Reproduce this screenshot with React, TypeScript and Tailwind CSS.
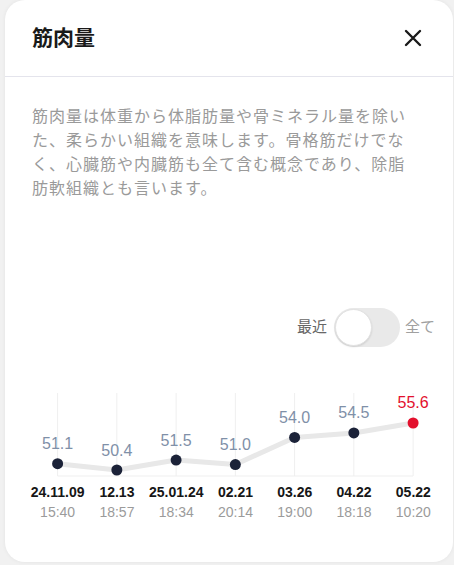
import React from "react";

const points = [
  { value: 51.1, date: "24.11.09", time: "15:40" },
  { value: 50.4, date: "12.13", time: "18:57" },
  { value: 51.5, date: "25.01.24", time: "18:34" },
  { value: 51.0, date: "02.21", time: "20:14" },
  { value: 54.0, date: "03.26", time: "19:00" },
  { value: 54.5, date: "04.22", time: "18:18" },
  { value: 55.6, date: "05.22", time: "10:20" },
];

const STEP = 59.25;
const X0 = 29.6;
const xAt = (i: number) => X0 + STEP * i;
const yAt = (v: number) => 80 - (v - 50.4) * 9.04;

function CloseIcon() {
  return (
    <svg width="18" height="18" viewBox="0 0 18 18" fill="none">
      <path d="M2 2L16 16M16 2L2 16" stroke="#1a1a1a" strokeWidth="2.4" strokeLinecap="round" />
    </svg>
  );
}

function Chart() {
  const last = points.length - 1;
  const linePath = points.map((p, i) => `${i === 0 ? "M" : "L"}${xAt(i)} ${yAt(p.value)}`).join(" ");

  return (
    <div className="ml-[23px] mt-[43px] w-[415px]">
      <svg width="415" height="90" viewBox="0 0 415 90" className="block">
        {points.map((_, i) => (
          <line key={i} x1={xAt(i)} x2={xAt(i)} y1={3} y2={86} stroke="#efefef" strokeWidth="1" />
        ))}
        <line x1={xAt(0)} x2={xAt(last)} y1={86} y2={86} stroke="#efefef" strokeWidth="1" />
        <path d={linePath} stroke="#e8e8e8" strokeWidth="5" fill="none" strokeLinecap="round" strokeLinejoin="round" />
        {points.map((p, i) => (
          <g key={p.date}>
            <circle cx={xAt(i)} cy={yAt(p.value)} r="5.5" fill={i === last ? "#e3102d" : "#1b2238"} />
            <text
              x={xAt(i)}
              y={yAt(p.value) - 14.5}
              textAnchor="middle"
              fontSize="16"
              fill={i === last ? "#e3102d" : "#7f90a8"}
              fontFamily='"Liberation Sans", Arial, sans-serif'
            >
              {p.value.toFixed(1)}
            </text>
          </g>
        ))}
      </svg>
      <div className="mt-[2px] grid grid-cols-7 font-['Liberation_Sans',Arial,sans-serif] text-[14px] leading-[20px]">
        {points.map((p) => (
          <div key={p.date} className="flex flex-col items-center">
            <span className="font-bold text-[#161616]">{p.date}</span>
            <span className="text-[#9b9b9b]">{p.time}</span>
          </div>
        ))}
      </div>
    </div>
  );
}

export default function App() {
  return (
    <div className="h-[565px] w-[454px] overflow-hidden bg-[#f1f1f1] pl-[5px] pr-px font-['Liberation_Sans','Noto_Sans_CJK_JP',sans-serif]">
      <div className="h-[562px] rounded-[20px] bg-white shadow-[0_0_4px_rgba(0,0,0,0.06)]">
        <div className="flex h-[77px] items-center justify-between border-b-[1.5px] border-[#e4e4ec] pl-[27px] pr-[31px]">
          <h1 className="text-[21px] font-bold text-[#1a1a1a]">筋肉量</h1>
          <CloseIcon />
        </div>

        <p className="ml-[27px] mt-[28px] w-[380px] text-[16px] leading-[24px] tracking-[1px] text-[#9a9a9a]">
          筋肉量は体重から体脂肪量や骨ミネラル量を除いた、柔らかい組織を意味します。骨格筋だけでなく、心臓筋や内臓筋も全て含む概念であり、除脂肪軟組織とも言います。
        </p>

        <div className="mt-[107px] flex items-center justify-end pr-[18px]">
          <span className="mr-[7px] text-[15px] text-[#666666]">最近</span>
          <div className="flex h-[39px] w-[66px] items-center rounded-full bg-[#e9e9e9] px-px">
            <div className="h-[37px] w-[37px] rounded-full border border-[#e2e2e2] bg-white shadow-[0_1px_2px_rgba(0,0,0,0.12)]" />
          </div>
          <span className="ml-[5px] text-[15px] text-[#a0a0a0]">全て</span>
        </div>

        <Chart />
      </div>
    </div>
  );
}
